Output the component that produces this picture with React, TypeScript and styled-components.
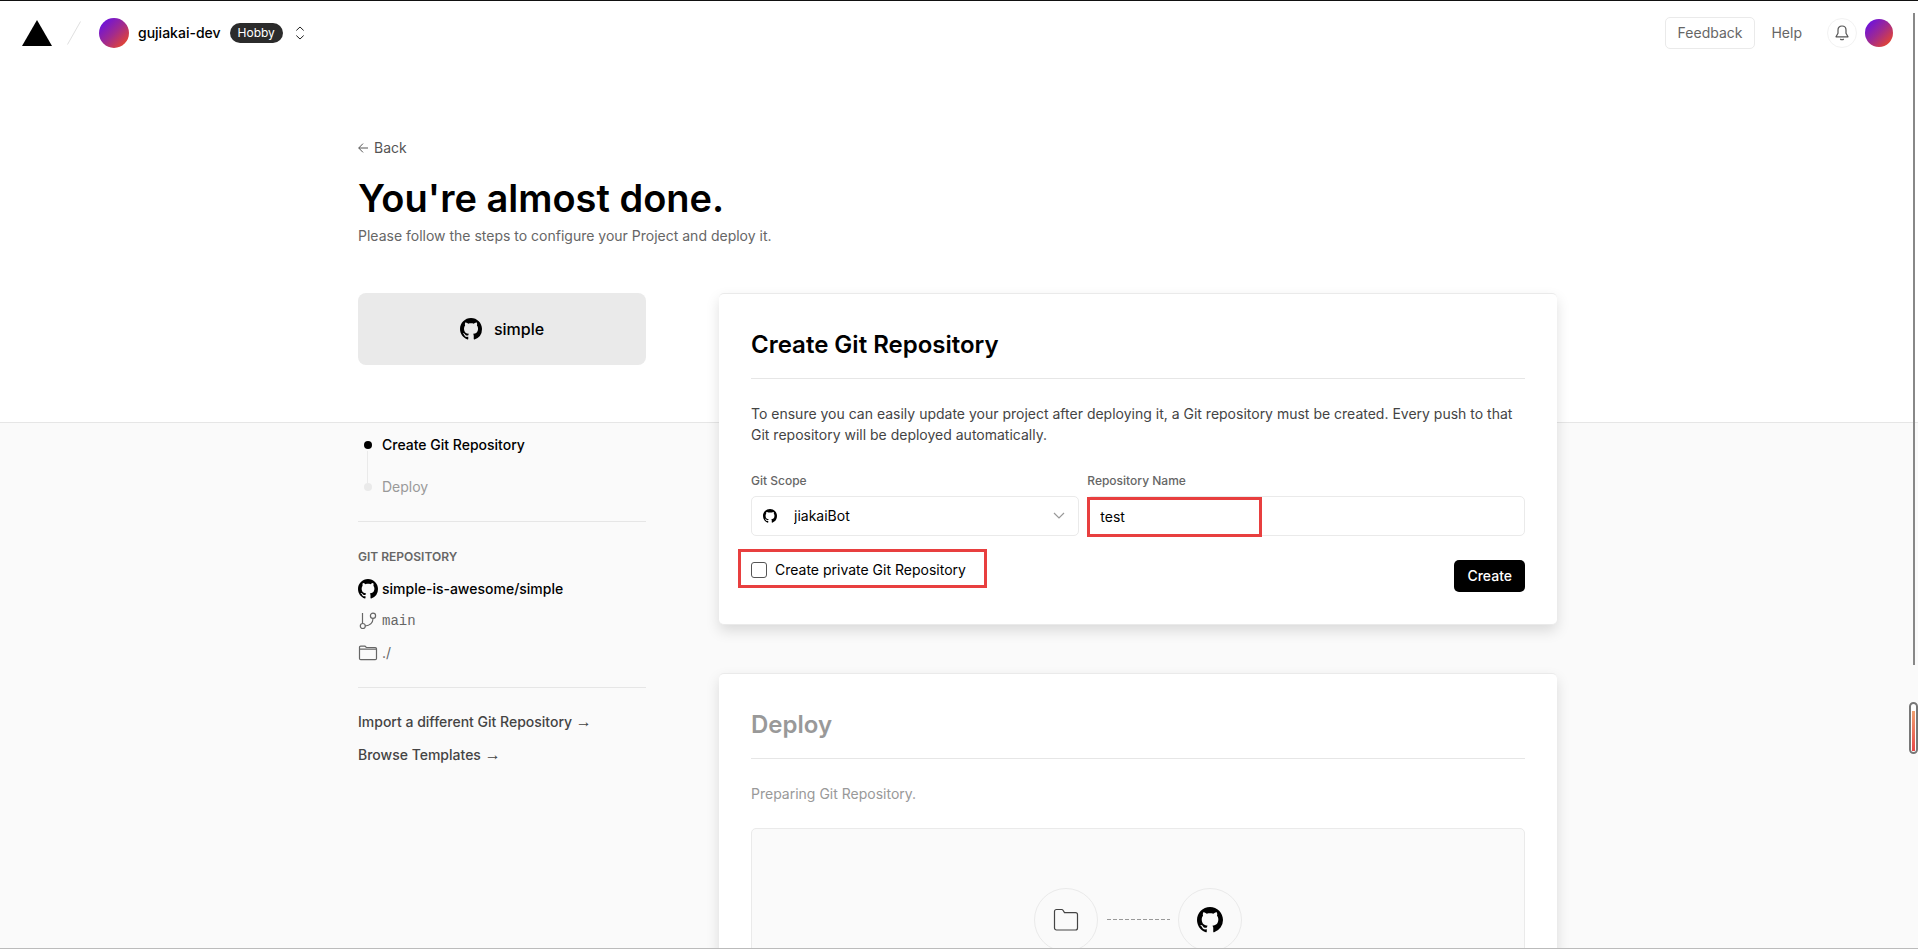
import React from 'react';
import styled, { createGlobalStyle } from 'styled-components';

const GlobalStyle = createGlobalStyle`
  *, *::before, *::after { box-sizing: border-box; }
  body {
    margin: 0;
    background: #fafafa;
    color: #000;
    font-family: Inter, "Liberation Sans", sans-serif;
    font-size: 14px;
    line-height: 20px;
  }
  h1, h2, h3, p, ul, ol { margin: 0; padding: 0; }
  ul, ol { list-style: none; }
  a { color: inherit; text-decoration: none; }
  button, input, select { font: inherit; color: inherit; margin: 0; }
  svg { display: block; flex: none; }
`;

/* ---------- icons ---------- */

const GithubMark = ({ size }: { size: number }) => (
  <svg width={size} height={size} viewBox="0 0 16 16" fill="#000" aria-hidden="true">
    <path d="M8 0C3.58 0 0 3.58 0 8c0 3.54 2.29 6.53 5.47 7.59.4.07.55-.17.55-.38 0-.19-.01-.82-.01-1.49-2.01.37-2.53-.49-2.69-.94-.09-.23-.48-.94-.82-1.13-.28-.15-.68-.52-.01-.53.63-.01 1.08.58 1.23.82.72 1.21 1.87.87 2.33.66.07-.52.28-.87.51-1.07-1.78-.2-3.64-.89-3.64-3.95 0-.87.31-1.59.82-2.15-.08-.2-.36-1.02.08-2.12 0 0 .67-.21 2.2.82.64-.18 1.32-.27 2-.27.68 0 1.36.09 2 .27 1.53-1.04 2.2-.82 2.2-.82.44 1.1.16 1.92.08 2.12.51.56.82 1.27.82 2.15 0 3.07-1.87 3.75-3.65 3.95.29.25.54.73.54 1.48 0 1.07-.01 1.93-.01 2.2 0 .21.15.46.55.38A8.013 8.013 0 0 0 16 8c0-4.42-3.58-8-8-8z" />
  </svg>
);

const Triangle = () => (
  <svg width="30" height="26" viewBox="0 0 30 26" aria-hidden="true">
    <path d="M15 0l15 26H0z" fill="#000" />
  </svg>
);

const Slash = () => (
  <svg width="16" height="24" viewBox="0 0 16 24" aria-hidden="true">
    <path d="M1.500 23.500L14.500 0.500" stroke="#e0e0e0" fill="none" />
  </svg>
);

const UpDown = () => (
  <svg width="10" height="14" viewBox="0 0 10 14" fill="none" stroke="#222" aria-hidden="true">
    <path d="M1.300 4.500L5 1l3.700 3.500M1.300 9.500L5 13l3.700-3.500" />
  </svg>
);

const Bell = () => (
  <svg width="14" height="16" viewBox="0 0 14 16" fill="none" stroke="#555" strokeWidth="1.200" aria-hidden="true">
    <path d="M7 1C4.600 1 3 2.800 3 5v3.200L1 11.800h12l-2-3.600V5c0-2.200-1.600-4-4-4z" strokeLinejoin="round" />
    <path d="M5.300 14c.9 1 2.500 1 3.400 0" />
  </svg>
);

const ArrowLeft = () => (
  <svg width="10" height="10" viewBox="0 0 10 10" fill="none" stroke="#555" aria-hidden="true">
    <path d="M10 5H.8M5 .6L.7 5 5 9.400" />
  </svg>
);

const Chevron = () => (
  <svg width="12" height="8" viewBox="0 0 12 8" fill="none" stroke="#999" strokeWidth="1.200" aria-hidden="true">
    <path d="M1 1l5 5 5-5" />
  </svg>
);

const Branch = () => (
  <svg width="20" height="20" viewBox="0 0 20 20" fill="none" stroke="#666" strokeWidth="1.200" aria-hidden="true">
    <path d="M4.500 2v10.500M15 7.500c0 4.500-3.400 7.200-7.800 7.500" />
    <circle cx="15" cy="4.800" r="2.600" />
    <circle cx="4.800" cy="15" r="2.500" />
  </svg>
);

const FolderWide = () => (
  <svg width="20" height="20" viewBox="0 0 20 20" fill="none" stroke="#666" strokeWidth="1.200" aria-hidden="true">
    <path d="M1.500 6.200h17v9.300c0 .8-.4 1.200-1.200 1.200H2.700c-.8 0-1.200-.4-1.200-1.200zM1.500 6.200V4.400c0-.8.4-1.200 1.200-1.200H7l1.400 1.300h8.900c.8 0 1.200.4 1.200 1.200v.5" />
  </svg>
);

const FolderOutline = () => (
  <svg width="26" height="24" viewBox="0 0 26 24" fill="none" stroke="#444" strokeWidth="1.200" aria-hidden="true">
    <path d="M1.500 20V3.500c0-1.200.8-2 2-2h5.200c.6 0 1 .2 1.300.7l1.500 2.400h11c1.200 0 2 .8 2 2V20c0 1.200-.8 2-2 2h-19c-1.200 0-2-.8-2-2z" />
  </svg>
);

/* ---------- page frame ---------- */

const Page = styled.div`
  position: relative;
  display: flex;
  flex-direction: column;
  height: 100vh;
  overflow: hidden;
  border-top: 1px solid #111;
  border-bottom: 1px solid #bbb;
  padding-right: 3px;
  background: linear-gradient(to bottom, #fff 421px, #e6e6e6 421px 422px, #fafafa 422px);
`;

const ScrollThumb = styled.div`
  position: absolute;
  top: 12px;
  right: 3px;
  bottom: 283px;
  width: 2px;
  background: #888;
`;

const Gauge = styled.div`
  position: absolute;
  right: 0;
  bottom: 194px;
  width: 9px;
  height: 52px;
  padding: 7px 1px 1px;
  border: 2px solid #777;
  border-radius: 5px;
  background: #fff;

  &::before {
    content: "";
    display: block;
    height: 100%;
    background: linear-gradient(#f0a070, #e84848);
  }
`;

/* ---------- header ---------- */

const Header = styled.header`
  display: flex;
  align-items: center;
  justify-content: space-between;
  flex: none;
  height: 64px;
  padding: 0 22px;
`;

const Group = styled.div<{ $gap: number }>`
  display: flex;
  align-items: center;
  gap: ${(p) => p.$gap}px;
`;

const Avatar = styled.span<{ $size: number }>`
  flex: none;
  width: ${(p) => p.$size}px;
  height: ${(p) => p.$size}px;
  border-radius: 50%;
  background: linear-gradient(135deg, #6a11e0 10%, #a02a90 50%, #f04a20 95%);
`;

const TeamName = styled.a`
  display: flex;
  align-items: center;
  gap: 9px;
  font-weight: 500;
`;

const Badge = styled.span`
  padding: 0 8px;
  border-radius: 10px;
  background: #2b2b2b;
  color: #fff;
  font-size: 12px;
  font-weight: 400;
`;

const PlainButton = styled.button`
  display: flex;
  padding: 0;
  border: 0;
  background: none;
`;

const FeedbackButton = styled.button`
  height: 32px;
  padding: 0 12px;
  border: 1px solid #eaeaea;
  border-radius: 5px;
  background: #fff;
  color: #666;
`;

const HelpLink = styled.a`
  color: #666;
`;

const RoundButton = styled.button`
  display: grid;
  place-items: center;
  width: 30px;
  height: 30px;
  padding: 0;
  border: 1px solid #f2f2f2;
  border-radius: 50%;
  background: #fff;
`;

/* ---------- content ---------- */

const Main = styled.main`
  width: 100%;
  max-width: 1199px;
  margin: 0 auto;
  padding-top: 73px;
`;

const BackLink = styled.a`
  display: inline-flex;
  align-items: center;
  gap: 6px;
  color: #555;
`;

const PageTitle = styled.h1`
  margin-top: 16px;
  font-size: 38px;
  line-height: 48px;
  font-weight: 600;
`;

const Subtitle = styled.p`
  margin-top: 2px;
  line-height: 24px;
  color: #666;
`;

const Columns = styled.div`
  display: grid;
  grid-template-columns: 288px minmax(0, 1fr);
  column-gap: 73px;
  align-items: start;
  margin-top: 45px;
`;

const Sidebar = styled.aside`
  display: flex;
  flex-direction: column;
`;

const ProjectTile = styled.div`
  display: flex;
  align-items: center;
  justify-content: center;
  gap: 12px;
  height: 72px;
  border-radius: 8px;
  background: #eaeaea;
  font-size: 16px;
  font-weight: 500;
`;

const Steps = styled.ol`
  display: flex;
  flex-direction: column;
  gap: 22px;
  margin-top: 70px;
  padding-left: 6px;
`;

const Step = styled.li<{ $active?: boolean }>`
  position: relative;
  display: flex;
  align-items: center;
  gap: 10px;
  font-weight: ${(p) => (p.$active ? 500 : 400)};
  color: ${(p) => (p.$active ? '#000' : '#999')};

  &::before {
    content: "";
    width: 8px;
    height: 8px;
    border-radius: 50%;
    background: ${(p) => (p.$active ? '#000' : '#eaeaea')};
  }

  &:not(:last-child)::after {
    content: "";
    position: absolute;
    top: 16px;
    left: 3px;
    width: 1px;
    height: 32px;
    background: #eaeaea;
  }
`;

const Rule = styled.hr<{ $top: number; $bottom: number }>`
  width: 100%;
  height: 1px;
  margin: ${(p) => p.$top}px 0 ${(p) => p.$bottom}px;
  border: 0;
  background: #e6e6e6;
`;

const SideHeading = styled.h3`
  font-size: 12px;
  font-weight: 600;
  color: #666;
  text-transform: uppercase;
`;

const RepoFacts = styled.ul`
  display: flex;
  flex-direction: column;
  gap: 12px;
  margin-top: 12px;
`;

const RepoFact = styled.li<{ $muted?: boolean; $mono?: boolean }>`
  display: flex;
  align-items: center;
  gap: 4px;
  color: ${(p) => (p.$muted ? '#666' : '#000')};
  font-weight: ${(p) => (p.$muted ? 400 : 500)};
  font-family: ${(p) => (p.$mono ? '"Liberation Mono", monospace' : 'inherit')};
`;

const SideLinks = styled.nav`
  display: flex;
  flex-direction: column;
  align-items: flex-start;
  gap: 13px;
  font-weight: 500;
  color: #444;
`;

const Arrow = styled.span`
  font-family: "Liberation Sans", sans-serif;
  font-size: 16px;
  font-weight: 400;
  line-height: 1;
`;

const Cards = styled.div`
  display: flex;
  flex-direction: column;
  gap: 48px;
`;

const Card = styled.section`
  padding: 32px;
  border-top: 1px solid #eaeaea;
  border-bottom: 1px solid #eaeaea;
  border-radius: 5px;
  background: #fff;
  box-shadow: 0 6px 14px rgba(0, 0, 0, 0.13);
`;

const CardTitle = styled.h2<{ $muted?: boolean }>`
  font-size: 24px;
  line-height: 38px;
  font-weight: 600;
  color: ${(p) => (p.$muted ? '#999' : '#000')};
`;

const CardText = styled.p<{ $muted?: boolean }>`
  line-height: 21px;
  color: ${(p) => (p.$muted ? '#999' : '#444')};
`;

const Fields = styled.div`
  display: grid;
  grid-template-columns: 3fr 4fr;
  gap: 8px;
  margin-top: 26px;
`;

const Field = styled.div`
  display: flex;
  flex-direction: column;
  gap: 5px;
`;

const FieldLabel = styled.label`
  color: #666;
  font-size: 12px;
  font-weight: 500;
`;

const Control = styled.div`
  position: relative;
  display: grid;
  align-items: center;
`;

const ScopeSelect = styled.select`
  appearance: none;
  width: 100%;
  height: 40px;
  padding: 0 40px 0 42px;
  border: 1px solid #eaeaea;
  border-radius: 5px;
  background: #fff;
`;

const NameInput = styled.input`
  width: 100%;
  height: 40px;
  padding: 0 12px;
  border: 1px solid #eaeaea;
  border-radius: 5px;
  background: #fff;
  outline: 0;
`;

const ControlIcon = styled.span<{ $side: 'left' | 'right' }>`
  position: absolute;
  ${(p) => p.$side}: ${(p) => (p.$side === 'left' ? 12 : 14)}px;
  pointer-events: none;
`;

const NameMarker = styled.span`
  position: absolute;
  top: 1px;
  left: 0;
  width: 175px;
  height: 40px;
  border: 3px solid #e83f3f;
  pointer-events: none;
`;

const FormFooter = styled.div`
  display: flex;
  align-items: flex-start;
  justify-content: space-between;
  margin-top: 24px;
`;

const CheckLabel = styled.label`
  position: relative;
  display: flex;
  align-items: center;
  gap: 8px;

  &::after {
    content: "";
    position: absolute;
    inset: -11px -21px -8px -13px;
    border: 3px solid #e83f3f;
    pointer-events: none;
  }
`;

const Checkbox = styled.input`
  appearance: none;
  width: 16px;
  height: 16px;
  border: 1px solid #555;
  border-radius: 3px;
  background: #fff;
`;

const CreateButton = styled.button`
  height: 32px;
  padding: 0 13px;
  border: 0;
  border-radius: 5px;
  background: #000;
  color: #fff;
  font-weight: 500;
`;

const Preview = styled.div`
  display: flex;
  justify-content: center;
  align-items: center;
  gap: 8px;
  height: 184px;
  margin-top: 24px;
  border: 1px solid #eaeaea;
  border-radius: 5px;
  background: #fafafa;
`;

const Node = styled.span`
  display: grid;
  place-items: center;
  width: 64px;
  height: 64px;
  border: 1px solid #eaeaea;
  border-radius: 50%;
`;

const DashedLink = () => (
  <svg width="64" height="2" viewBox="0 0 64 2" aria-hidden="true">
    <path d="M1 .5h63" stroke="#999" strokeDasharray="4 2" />
  </svg>
);

export default function App() {
  return (
    <>
      <GlobalStyle />
      <Page>
        <Header>
          <Group $gap={14}>
            <a href="#home" aria-label="Home"><Triangle /></a>
            <Group $gap={17}>
              <Slash />
              <Group $gap={12}>
                <TeamName href="#team">
                  <Avatar $size={30} />
                  <span>gujiakai-dev</span>
                  <Badge>Hobby</Badge>
                </TeamName>
                <PlainButton type="button" aria-label="Switch team"><UpDown /></PlainButton>
              </Group>
            </Group>
          </Group>
          <Group $gap={25}>
            <Group $gap={16}>
              <FeedbackButton type="button">Feedback</FeedbackButton>
              <HelpLink href="#help">Help</HelpLink>
            </Group>
            <Group $gap={8}>
              <RoundButton type="button" aria-label="Notifications"><Bell /></RoundButton>
              <Avatar $size={28} />
            </Group>
          </Group>
        </Header>

        <Main>
          <BackLink href="#back"><ArrowLeft />Back</BackLink>
          <PageTitle>You're almost done.</PageTitle>
          <Subtitle>Please follow the steps to configure your Project and deploy it.</Subtitle>

          <Columns>
            <Sidebar>
              <ProjectTile><GithubMark size={22} />simple</ProjectTile>
              <Steps>
                <Step $active>Create Git Repository</Step>
                <Step>Deploy</Step>
              </Steps>
              <Rule $top={24} $bottom={25} />
              <SideHeading>Git Repository</SideHeading>
              <RepoFacts>
                <RepoFact><GithubMark size={20} />simple-is-awesome/simple</RepoFact>
                <RepoFact $muted $mono><Branch />main</RepoFact>
                <RepoFact $muted><FolderWide />./</RepoFact>
              </RepoFacts>
              <Rule $top={24} $bottom={24} />
              <SideLinks>
                <a href="#import">Import a different Git Repository <Arrow>→</Arrow></a>
                <a href="#templates">Browse Templates <Arrow>→</Arrow></a>
              </SideLinks>
            </Sidebar>

            <Cards>
              <Card>
                <CardTitle>Create Git Repository</CardTitle>
                <Rule $top={14} $bottom={24} />
                <CardText>
                  To ensure you can easily update your project after deploying it, a Git repository must be
                  created. Every push to that Git repository will be deployed automatically.
                </CardText>
                <Fields>
                  <Field>
                    <FieldLabel htmlFor="scope">Git Scope</FieldLabel>
                    <Control>
                      <ScopeSelect id="scope" defaultValue="jiakaiBot">
                        <option>jiakaiBot</option>
                      </ScopeSelect>
                      <ControlIcon $side="left"><GithubMark size={14} /></ControlIcon>
                      <ControlIcon $side="right"><Chevron /></ControlIcon>
                    </Control>
                  </Field>
                  <Field>
                    <FieldLabel htmlFor="repo-name">Repository Name</FieldLabel>
                    <Control>
                      <NameInput id="repo-name" type="text" defaultValue="test" />
                      <NameMarker />
                    </Control>
                  </Field>
                </Fields>
                <FormFooter>
                  <CheckLabel>
                    <Checkbox type="checkbox" />
                    Create private Git Repository
                  </CheckLabel>
                  <CreateButton type="button">Create</CreateButton>
                </FormFooter>
              </Card>

              <Card>
                <CardTitle $muted>Deploy</CardTitle>
                <Rule $top={14} $bottom={24} />
                <CardText $muted>Preparing Git Repository.</CardText>
                <Preview>
                  <Node><FolderOutline /></Node>
                  <DashedLink />
                  <Node><GithubMark size={26} /></Node>
                </Preview>
              </Card>
            </Cards>
          </Columns>
        </Main>
        <ScrollThumb />
        <Gauge />
      </Page>
    </>
  );
}
